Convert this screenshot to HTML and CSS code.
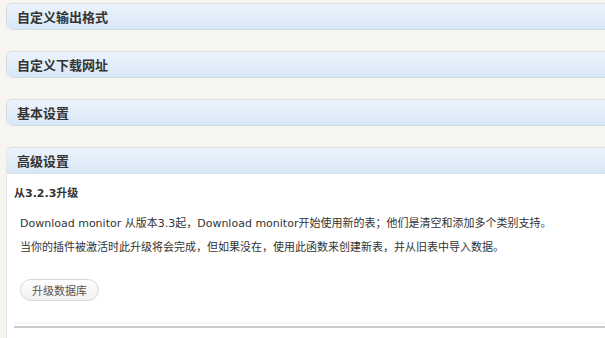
FILE: index.html
```html
<!DOCTYPE html>
<html lang="zh-CN">
<head>
    <meta charset="UTF-8">
    <meta name="viewport" content="width=device-width, initial-scale=1.0">
    <title>Download monitor 设置</title>
    <link rel="stylesheet" href="styles.css">
</head>
<body>
    <div class="wrap">
        <div class="postbox">
            <h3 class="hndle">自定义输出格式</h3>
        </div>
        <div class="postbox">
            <h3 class="hndle">自定义下载网址</h3>
        </div>
        <div class="postbox">
            <h3 class="hndle">基本设置</h3>
        </div>
        <div class="postbox open">
            <h3 class="hndle">高级设置</h3>
            <div class="inside">
                <h4>从3.2.3升级</h4>
                <p class="lead">Download monitor 从版本3.3起，Download monitor开始使用新的表；他们是清空和添加多个类别支持。</p>
                <p class="note">当你的插件被激活时此升级将会完成，但如果没在，使用此函数来创建新表，并从旧表中导入数据。</p>
                <button class="button">升级数据库</button>
                <hr class="sep">
            </div>
        </div>
    </div>
</body>
</html>
```

FILE: styles.css
```css
body {
    margin: 0;
    background-color: #f7f5f0;
    font-family: "DejaVu Sans", "Noto Sans CJK SC", sans-serif;
    color: #333;
    overflow: hidden;
}
.wrap {
    padding: 3px 0 0 6px;
    width: calc(100% + 20px);
}
.postbox {
    margin-bottom: 21px;
    border: 1px solid #d5dde3;
    border-radius: 6px 0 0 6px;
    background-color: #fff;
}
.hndle {
    margin: 0;
    height: 25px;
    line-height: 26px;
    padding-left: 10px;
    font-size: 13px;
    font-weight: bold;
    font-family: "Noto Sans CJK SC", sans-serif;
    color: #333;
    background: linear-gradient(#ecf3fc, #d8e7f5);
    border-radius: 5px 0 0 5px;
}
.open .hndle {
    border-radius: 5px 0 0 0;
    border-bottom: 1px solid #d5e1ec;
}
.open {
    border-radius: 6px 0 0 0;
    border-color: #e4e6e8;
    border-top-color: #d5dde3;
}
.inside {
    padding: 12px 0 40px 7px;
}
.inside h4 {
    margin: 0 0 14px;
    font-size: 11px;
    font-weight: bold;
    color: #333;
    line-height: 16px;
}
.lead, .note {
    margin: 0 0 8px 6px;
    font-size: 11px;
    line-height: 16px;
    color: #333;
}
.note {
    margin-bottom: 23px;
}
.button {
    margin-left: 6px;
    height: 22px;
    padding: 0 11px;
    font-size: 11px;
    font-family: "Noto Sans CJK SC", sans-serif;
    color: #555;
    border: 1px solid #d8d8d8;
    border-radius: 11px;
    background: linear-gradient(#ffffff, #f0f0f0);
}
.sep {
    margin: 25px 0 0 0;
    height: 2px;
    border: 0;
    background-color: #cccccc;
    box-shadow: 0 -4px 0 #f6f6f6;
}
```
